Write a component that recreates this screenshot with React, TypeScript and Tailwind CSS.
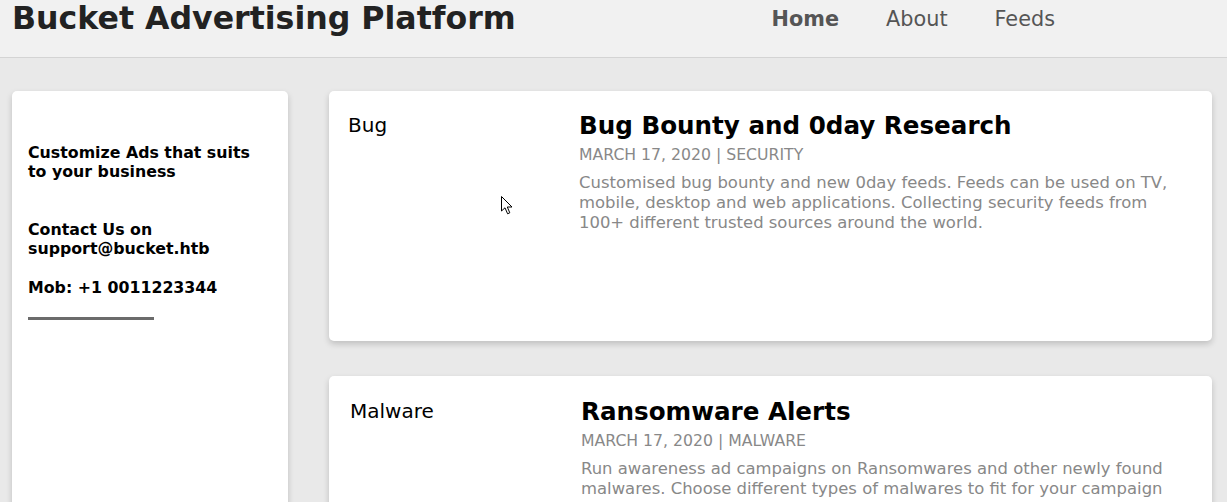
import React from "react";

type Feed = {
  label: string;
  title: string;
  meta: string;
  body: string;
  shift?: boolean;
};

const feeds: Feed[] = [
  {
    label: "Bug",
    title: "Bug Bounty and 0day Research",
    meta: "MARCH 17, 2020 | SECURITY",
    body: "Customised bug bounty and new 0day feeds. Feeds can be used on TV, mobile, desktop and web applications. Collecting security feeds from 100+ different trusted sources around the world.",
  },
  {
    label: "Malware",
    title: "Ransomware Alerts",
    meta: "MARCH 17, 2020 | MALWARE",
    body: "Run awareness ad campaigns on Ransomwares and other newly found malwares. Choose different types of malwares to fit for your campaign",
    shift: true,
  },
];

function FeedCard({ feed }: { feed: Feed }) {
  return (
    <div className="h-[250px] shrink-0 rounded-[5px] bg-white shadow-[0_3px_6px_rgba(0,0,0,0.18)]">
      <div className={`flex ${feed.shift ? "pl-[21px] pt-[20px]" : "pl-[19px] pt-[19px]"}`}>
        <div className="w-[231px] shrink-0 pt-[3px] text-[20px] leading-[24px] text-black">
          {feed.label}
        </div>
        <div className="pr-[30px]">
          <h2 className="text-[24.6px] font-bold leading-[32px] text-black">{feed.title}</h2>
          <p className="mt-[3px] text-[15.7px] leading-[20px] text-[#888]">{feed.meta}</p>
          <p className="mt-[8px] text-[16.45px] leading-[20px] text-[#888]">{feed.body}</p>
        </div>
      </div>
    </div>
  );
}

export default function App() {
  return (
    <div
      className="relative h-[502px] overflow-hidden bg-[#e9e9e9]"
      style={{ fontFamily: '"DejaVu Sans", Verdana, sans-serif' }}
    >
      <header className="flex h-[58px] items-start justify-between border-b border-[#d4d4d4] bg-[#f1f1f1]">
        <h1 className="ml-[12px] mt-[-1px] text-[31.6px] font-bold leading-[38px] text-[#222]">
          Bucket Advertising Platform
        </h1>
        <nav className="mr-[172px] mt-[5px] flex gap-[47px] text-[20.8px] leading-[28px] text-[#555]">
          <a className="font-bold">Home</a>
          <a>About</a>
          <a>Feeds</a>
        </nav>
      </header>

      <main className="flex gap-[41px] pl-[12px] pr-[15px] pt-[33px]">
        <aside className="h-[480px] w-[276px] shrink-0 rounded-[5px] bg-white px-[16px] pt-[52px] text-[15.8px] font-bold leading-[19px] text-black shadow-[0_3px_6px_rgba(0,0,0,0.18)]">
          <p>Customize Ads that suits to your business</p>
          <p className="mt-[39px]">
            Contact Us on
            <br />
            support@bucket.htb
          </p>
          <p className="mt-[20px]">Mob: +1 0011223344</p>
          <div className="mt-[20px] h-[3px] w-[126px] bg-[#6b6b6b]" />
        </aside>

        <section className="flex flex-1 flex-col gap-[35px]">
          {feeds.map((f) => (
            <FeedCard key={f.label} feed={f} />
          ))}
        </section>
      </main>

      <svg
        className="absolute left-[501px] top-[196px]"
        width="13"
        height="20"
        viewBox="0 0 13 20"
      >
        <path
          d="M0.5 0.5 L0.5 15 L4 11.8 L6.6 17.8 L8.8 16.8 L6.3 11 L11 11 Z"
          fill="#fff"
          stroke="#000"
          strokeWidth="1"
          strokeLinejoin="miter"
        />
      </svg>
    </div>
  );
}
